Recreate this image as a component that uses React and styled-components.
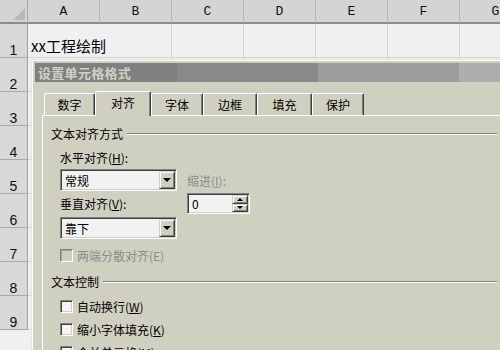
import React from "react";
import styled, { createGlobalStyle } from "styled-components";

const GlobalStyle = createGlobalStyle`
  *, *::before, *::after { box-sizing: border-box; }
  html, body { margin: 0; padding: 0; }
  body {
    background: #f0f0f0;
    overflow: hidden;
    font-family: "Noto Sans CJK SC", sans-serif;
    font-size: 12px;
  }
`;

const Screen = styled.div`
  position: relative;
  width: 500px;
  height: 350px;
  overflow: hidden;
`;

const Sheet = styled.div`
  display: grid;
  grid-template-columns: 28px repeat(7, 72px);
  grid-template-rows: 24px repeat(9, 34px);
`;

const Corner = styled.div`
  position: relative;
  background: #d4d4d4;
  border-right: 1px solid #a8a8a8;
  border-bottom: 2px solid #8c8c8c;
  &::after {
    content: "";
    position: absolute;
    right: 2px;
    bottom: 2px;
    border-left: 12px solid transparent;
    border-bottom: 12px solid #b9b9b9;
  }
`;

const ColHead = styled.div`
  display: flex;
  align-items: center;
  justify-content: center;
  background: #d4d4d4;
  border-right: 1px solid #b4b4b4;
  border-bottom: 2px solid #8c8c8c;
  font-family: "Liberation Mono", monospace;
  font-size: 13px;
  color: #111;
`;

const RowHead = styled.div`
  display: flex;
  align-items: flex-end;
  justify-content: center;
  padding-bottom: 1px;
  background: #d8d8d8;
  border-right: 1px solid #a0a0a0;
  border-bottom: 1px solid #a8a8a8;
  font-family: "Liberation Sans", sans-serif;
  font-size: 14px;
  line-height: 12px;
  color: #111;
`;

const Cell = styled.div`
  grid-column: span ${(p) => p.$span || 1};
  display: flex;
  align-items: flex-end;
  padding: 0 0 1px 3px;
  background: #f0f0f0;
  border-right: 1px solid #d4d4d4;
  border-bottom: 1px solid #d4d4d4;
  font-size: 15px;
  white-space: nowrap;
  color: #000;
`;

const Dialog = styled.div`
  position: absolute;
  left: 31px;
  top: 59px;
  width: 500px;
  height: 320px;
  padding: 3px;
  background: #d0d0c0;
  border: 1px solid;
  border-color: #e4e4dc #404040 #404040 #e4e4dc;
  box-shadow: inset 1px 1px #ffffff;
`;

const TitleBar = styled.div`
  height: 19px;
  padding-left: 3px;
  display: flex;
  align-items: center;
  background: linear-gradient(
    to right,
    #808080 0 142px,
    #898989 142px 283px,
    #9c9c9c 283px 424px,
    #aeaeae 424px
  );
  color: #d0d0c0;
  font-weight: bold;
  font-size: 13px;
  letter-spacing: 0.3px;
`;

const TabRow = styled.div`
  display: flex;
  align-items: flex-end;
  height: 24px;
  margin: 9px 0 0 9px;
  position: relative;
  z-index: 1;
`;

const Tab = styled.div`
  width: ${(p) => p.$w}px;
  height: ${(p) => (p.$active ? 25 : 22)}px;
  margin-bottom: ${(p) => (p.$active ? -1 : 0)}px;
  display: flex;
  align-items: center;
  justify-content: center;
  padding-bottom: ${(p) => (p.$active ? 3 : 0)}px;
  background: #d0d0c0;
  border-top: 1px solid #ffffff;
  border-left: 1px solid #ffffff;
  border-right: 1px solid #404040;
  box-shadow: inset -1px 0 #808080;
  border-radius: 2px 2px 0 0;
  color: #000;
`;

const Panel = styled.div`
  margin-left: 7px;
  width: 480px;
  height: 260px;
  border-top: 1px solid #ffffff;
  border-left: 1px solid #ffffff;
  padding: 11px 0 0 8px;
`;

const GroupHeader = styled.div`
  display: flex;
  align-items: center;
  gap: 4px;
  width: 446px;
  height: 14px;
  line-height: 14px;
  margin-top: ${(p) => p.$top || 0}px;
  color: #000;
  &::after {
    content: "";
    flex: 1;
    height: 2px;
    border-top: 1px solid #808080;
    border-bottom: 1px solid #ffffff;
  }
`;

const GroupBody = styled.div`
  padding-left: 9px;
`;

const AlignGrid = styled.div`
  display: grid;
  grid-template-columns: 117px 10px 63px;
  grid-template-rows: 18px 24px 24px 22px;
  margin-top: 10px;
`;

const Label = styled.div`
  grid-column: ${(p) => p.$col || 1};
  grid-row: ${(p) => p.$row};
  align-self: ${(p) => p.$align || "start"};
  margin-top: ${(p) => p.$top || 0}px;
  height: 14px;
  line-height: 14px;
  color: ${(p) => (p.$disabled ? "#8c8c8c" : "#000")};
  white-space: nowrap;
`;

const Sunken = styled.div`
  grid-column: ${(p) => p.$col || 1};
  grid-row: ${(p) => p.$row};
  align-self: start;
  height: ${(p) => p.$h}px;
  display: flex;
  align-items: center;
  justify-content: space-between;
  padding: 0 1px 0 4px;
  background: #f2f2f2;
  border: 1px solid;
  border-color: #808080 #ffffff #ffffff #808080;
  box-shadow: inset 1px 1px #404040, inset -1px -1px #d0d0c0;
  color: #000;
`;

const DropButton = styled.div`
  width: 16px;
  height: 18px;
  display: flex;
  align-items: center;
  justify-content: center;
  background: #d0d0c0;
  border: 1px solid;
  border-color: #d0d0c0 #404040 #404040 #d0d0c0;
  box-shadow: inset 1px 1px #ffffff, inset -1px -1px #808080;
`;

const SpinStack = styled.div`
  display: flex;
  flex-direction: column;
  width: 16px;
  height: 17px;
`;

const SpinButton = styled.div`
  flex: 1;
  display: flex;
  align-items: center;
  justify-content: center;
  background: #d0d0c0;
  border: 1px solid;
  border-color: #d0d0c0 #404040 #404040 #d0d0c0;
  box-shadow: inset 1px 1px #ffffff, inset -1px -1px #808080;
`;

const Arrow = styled.span`
  width: 0;
  height: 0;
  border-left: ${(p) => p.$size}px solid transparent;
  border-right: ${(p) => p.$size}px solid transparent;
  ${(p) =>
    p.$up
      ? `border-bottom: ${p.$size}px solid #000;`
      : `border-top: ${p.$size}px solid #000;`}
`;

const CheckRow = styled.div`
  display: flex;
  align-items: center;
  gap: 4px;
  height: 14px;
  margin-top: ${(p) => p.$top}px;
  color: ${(p) => (p.$disabled ? "#8c8c8c" : "#000")};
  white-space: nowrap;
`;

const Box = styled.span`
  width: 13px;
  height: 13px;
  background: ${(p) => (p.$disabled ? "#d0d0c0" : "#f4f4f4")};
  border: 1px solid;
  border-color: #808080 #ffffff #ffffff #808080;
  box-shadow: inset 1px 1px ${(p) => (p.$disabled ? "#a0a0a0" : "#404040")},
    inset -1px -1px #d0d0c0;
`;

const cols = ["A", "B", "C", "D", "E", "F", "G"];
const tabs = [
  { name: "数字", w: 51 },
  { name: "对齐", w: 56, active: true },
  { name: "字体", w: 52 },
  { name: "边框", w: 54 },
  { name: "填充", w: 55 },
  { name: "保护", w: 52 },
];

const Combo = ({ row, value }) => (
  <Sunken $row={row} $h={22}>
    <span>{value}</span>
    <DropButton>
      <Arrow $size={4} />
    </DropButton>
  </Sunken>
);

const Check = ({ top, disabled, children }) => (
  <CheckRow $top={top} $disabled={disabled}>
    <Box $disabled={disabled} />
    <span>{children}</span>
  </CheckRow>
);

export default function App() {
  return (
    <Screen>
      <GlobalStyle />
      <Sheet>
        <Corner />
        {cols.map((c) => (
          <ColHead key={c}>{c}</ColHead>
        ))}
        {Array.from({ length: 9 }, (_, r) => (
          <React.Fragment key={r}>
            <RowHead>{r + 1}</RowHead>
            {r === 0 ? (
              <>
                <Cell $span={2}>xx工程绘制</Cell>
                {cols.slice(2).map((c) => (
                  <Cell key={c} />
                ))}
              </>
            ) : (
              cols.map((c) => <Cell key={c} />)
            )}
          </React.Fragment>
        ))}
      </Sheet>

      <Dialog>
        <TitleBar>设置单元格格式</TitleBar>
        <TabRow>
          {tabs.map((t) => (
            <Tab key={t.name} $w={t.w} $active={t.active}>
              {t.name}
            </Tab>
          ))}
        </TabRow>
        <Panel>
          <GroupHeader>文本对齐方式</GroupHeader>
          <GroupBody>
            <AlignGrid>
              <Label $row={1}>
                水平对齐(<u>H</u>):
              </Label>
              <Combo row={2} value="常规" />
              <Label $row={2} $col={3} $align="center" $disabled>
                缩进(<u>I</u>):
              </Label>
              <Label $row={3} $top={4}>
                垂直对齐(<u>V</u>):
              </Label>
              <Sunken $row={3} $col={3} $h={21}>
                <span>0</span>
                <SpinStack>
                  <SpinButton>
                    <Arrow $size={3} $up />
                  </SpinButton>
                  <SpinButton>
                    <Arrow $size={3} />
                  </SpinButton>
                </SpinStack>
              </Sunken>
              <Combo row={4} value="靠下" />
            </AlignGrid>
            <Check top={9} disabled>
              两端分散对齐(E)
            </Check>
          </GroupBody>
          <GroupHeader $top={13}>文本控制</GroupHeader>
          <GroupBody>
            <Check top={10}>
              自动换行(<u>W</u>)
            </Check>
            <Check top={9}>
              缩小字体填充(<u>K</u>)
            </Check>
            <Check top={9}>
              合并单元格(<u>M</u>)
            </Check>
          </GroupBody>
        </Panel>
      </Dialog>
    </Screen>
  );
}
